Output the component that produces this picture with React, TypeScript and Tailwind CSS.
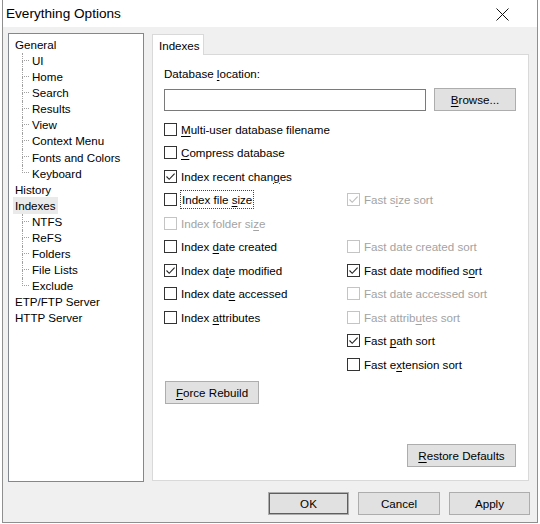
import React from 'react';

const FONT = { fontFamily: '"Liberation Sans", Arial, sans-serif' };

type Opt = {
  pre: string;
  key?: string;
  post?: string;
  checked?: boolean;
  disabled?: boolean;
  focus?: boolean;
};

function Label({ pre, k, post }: { pre: string; k?: string; post?: string }) {
  return (
    <>
      {pre}
      {k && <span className="underline underline-offset-2">{k}</span>}
      {post}
    </>
  );
}

function Check({ opt }: { opt: Opt }) {
  const box = opt.disabled ? 'border-[#c4c4c4]' : 'border-[#333333]';
  const tick = opt.disabled ? '#bdbdbd' : '#222222';
  return (
    <div className={`flex items-center gap-[4px] ${opt.disabled ? 'text-[#a3a3a3]' : 'text-black'}`}>
      <span className={`flex h-[13px] w-[13px] shrink-0 items-center justify-center border bg-white ${box}`}>
        {opt.checked && (
          <svg width="11" height="11" viewBox="0 0 11 11">
            <path d="M1.5 5.5 L4.2 8.3 L9.6 2.6" fill="none" stroke={tick} strokeWidth="1.1" />
          </svg>
        )}
      </span>
      <span className={opt.focus ? 'px-[1px] outline outline-1 outline-dotted outline-[#444]' : ''}>
        <Label pre={opt.pre} k={opt.key} post={opt.post} />
      </span>
    </div>
  );
}

const ROWS: [Opt | null, Opt | null][] = [
  [{ pre: '', key: 'M', post: 'ulti-user database filename' }, null],
  [{ pre: '', key: 'C', post: 'ompress database' }, null],
  [{ pre: 'Index recent chan', key: 'g', post: 'es', checked: true }, null],
  [
    { pre: 'Index file ', key: 's', post: 'ize', focus: true },
    { pre: 'Fast s', key: 'i', post: 'ze sort', checked: true, disabled: true },
  ],
  [{ pre: 'Index folder si', key: 'z', post: 'e', disabled: true }, null],
  [
    { pre: 'Index ', key: 'd', post: 'ate created' },
    { pre: 'Fast date created sort', disabled: true },
  ],
  [
    { pre: 'Index da', key: 't', post: 'e modified', checked: true },
    { pre: 'Fast date modified s', key: 'o', post: 'rt', checked: true },
  ],
  [
    { pre: 'Index dat', key: 'e', post: ' accessed' },
    { pre: 'Fast date accessed sort', disabled: true },
  ],
  [
    { pre: 'Index ', key: 'a', post: 'ttributes' },
    { pre: 'Fast attrib', key: 'u', post: 'tes sort', disabled: true },
  ],
  [null, { pre: 'Fast ', key: 'p', post: 'ath sort', checked: true }],
  [null, { pre: 'Fast e', key: 'x', post: 'tension sort' }],
];

const TREE: { label: string; children?: string[]; selected?: boolean }[] = [
  {
    label: 'General',
    children: ['UI', 'Home', 'Search', 'Results', 'View', 'Context Menu', 'Fonts and Colors', 'Keyboard'],
  },
  { label: 'History' },
  { label: 'Indexes', selected: true, children: ['NTFS', 'ReFS', 'Folders', 'File Lists', 'Exclude'] },
  { label: 'ETP/FTP Server' },
  { label: 'HTTP Server' },
];

function TreeChild({ label, last }: { label: string; last: boolean }) {
  return (
    <div className="flex h-[16.1px] items-stretch">
      <div className="ml-[7px] flex w-[7px] flex-col">
        <div className="h-1/2 border-b border-l border-dotted border-[#a0a0a0]" />
        <div className={`h-1/2 ${last ? '' : 'border-l border-dotted border-[#a0a0a0]'}`} />
      </div>
      <span className="ml-[3px] flex items-center">{label}</span>
    </div>
  );
}

function Btn({ children, className = '' }: { children: React.ReactNode; className?: string }) {
  return (
    <button
      className={`flex h-[23px] items-center justify-center border border-[#adadad] bg-[#e1e1e1] text-[11.6px] text-black ${className}`}
    >
      {children}
    </button>
  );
}

export default function App() {
  return (
    <div className="h-[524px] w-[540px] bg-white" style={FONT}>
      <div className="ml-[2px] flex h-[523px] w-[536px] flex-col border-x border-b border-[#8f8f8f] bg-[#f0f0f0]">
        <div className="flex h-[27px] shrink-0 items-center justify-between bg-white pl-[3px] pr-[28px] pt-[2px]">
          <span className="text-[13.6px] text-black">Everything Options</span>
          <svg width="13" height="13" viewBox="0 0 13 13">
            <path d="M0.5 0.5 L12.5 12.5 M12.5 0.5 L0.5 12.5" stroke="#111" strokeWidth="1" />
          </svg>
        </div>

        <div className="flex pl-[5px] pt-[6px] text-[11.6px] text-black">
          <div className="h-[449px] w-[136px] border border-[#828790] bg-white pt-[2.5px] pl-[6px]">
            {TREE.map((n) => (
              <div key={n.label}>
                <div className="flex h-[16.1px] items-center">
                  <span className={`-ml-[2px] px-[2px] ${n.selected ? 'bg-[#eaeaea]' : ''}`}>{n.label}</span>
                </div>
                {n.children?.map((c, i) => (
                  <TreeChild key={c} label={c} last={i === n.children!.length - 1} />
                ))}
              </div>
            ))}
          </div>

          <div className="ml-[8px] mt-[1px] flex w-[377px] flex-col">
            <div className="flex">
              <div className="relative z-10 -mb-[1px] flex h-[21px] w-[52px] items-center border-x border-t border-[#d9d9d9] bg-white pl-[6px] pt-[1px]">
                Indexes
              </div>
            </div>
            <div className="flex h-[427px] flex-col border border-[#d9d9d9] bg-white pl-[11px] pr-[12px]">
              <div className="mt-[12px] h-[14px] leading-[14px]">
                Database <Label pre="" k="l" post="ocation:" />
              </div>
              <div className="mt-[7px] flex items-center">
                <div className="h-[22px] w-[262px] border border-[#7a7a7a] bg-white" />
                <Btn className="ml-[8px] w-[82px]">
                  <Label pre="" k="B" post="rowse..." />
                </Btn>
              </div>
              <div className="mt-[6.5px] grid grid-cols-[183px_1fr] auto-rows-[23.5px] items-center">
                {ROWS.map(([l, r], i) => (
                  <React.Fragment key={i}>
                    <div>{l && <Check opt={l} />}</div>
                    <div>{r && <Check opt={r} />}</div>
                  </React.Fragment>
                ))}
              </div>
              <Btn className="ml-[1px] mt-[5px] w-[94px]">
                <Label pre="" k="F" post="orce Rebuild" />
              </Btn>
              <div className="flex-1" />
              <div className="mb-[13px] flex justify-end">
                <Btn className="w-[109px]">
                  <Label pre="" k="R" post="estore Defaults" />
                </Btn>
              </div>
            </div>
          </div>
        </div>

        <div className="mt-[10px] flex justify-end gap-[9px] pr-[7px]">
          <Btn className="w-[81px] border-[#0078d7] outline outline-1 -outline-offset-2 outline-[#0078d7]">OK</Btn>
          <Btn className="w-[82px]">Cancel</Btn>
          <Btn className="w-[81px]">Apply</Btn>
        </div>
      </div>
    </div>
  );
}
